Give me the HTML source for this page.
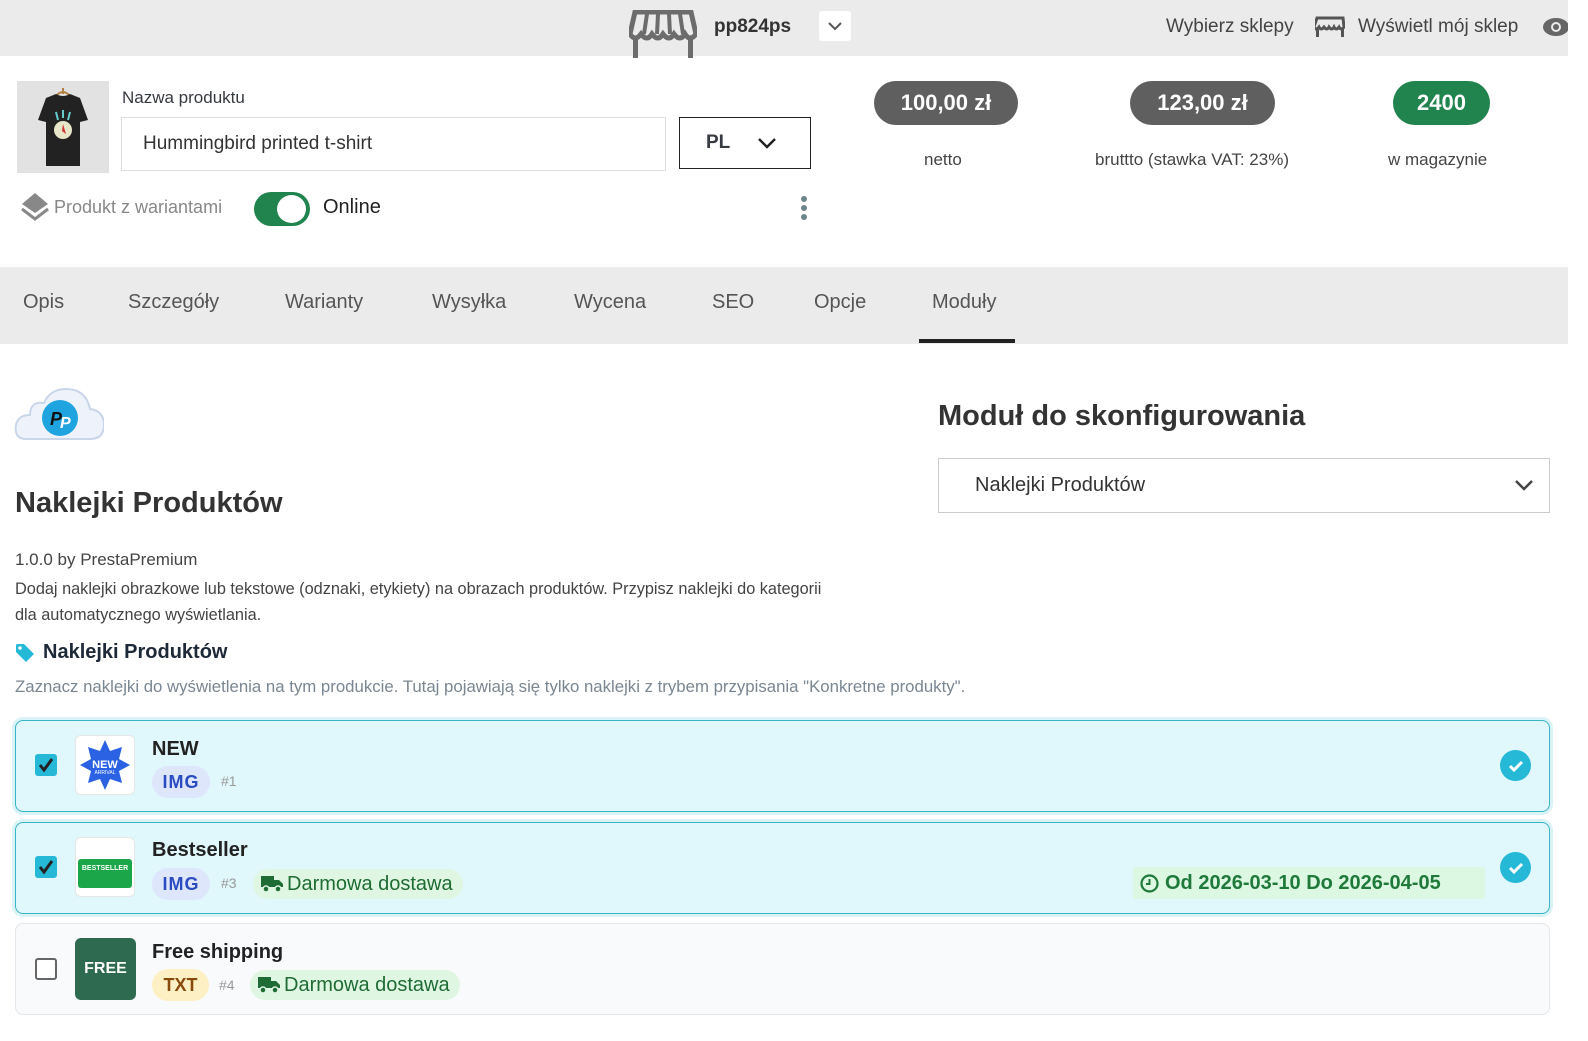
<!DOCTYPE html>
<html><head><meta charset="utf-8"><style>
*{box-sizing:border-box;margin:0;padding:0}
body{width:1588px;height:1041px;overflow:hidden;background:#fff;font-family:"Liberation Sans",sans-serif;color:#363a41;position:relative}
.a{position:absolute;white-space:nowrap}
.top{left:0;top:0;width:1568px;height:56px;background:#ebebeb}
.tabs{left:0;top:267px;width:1568px;height:77px;background:#ebebeb}
.tab{top:291px;font-size:20px;color:#555}
.pill{height:44px;border-radius:22px;background:#5f5f5f;color:#fff;font-weight:bold;font-size:22px;line-height:44px;text-align:center;top:81px}
.lbl{top:150px;font-size:17px;color:#444;text-align:center}
.card{left:15px;width:1535px;border-radius:8px}
.sel{background:#e0f7fc;border:1.5px solid #3ab5c5;box-shadow:0 0 0 3px #d9f3f7}
.cb{width:22px;height:22px;border-radius:3px}
.thumb{width:60px;height:60px;border-radius:6px;background:#fff;border:1px solid #e6e6e6}
.nm{font-size:20px;font-weight:bold;color:#222}
.tag{height:32px;border-radius:16px;font-weight:bold;font-size:18px;line-height:32px;text-align:center}
.img{background:#dde6fb;color:#2a4cc0;width:58px;letter-spacing:1px}
.hash{font-size:14px;color:#999}
.ship{background:#dff7e2;color:#1f6b34;font-size:20px;height:30px;line-height:30px;border-radius:15px;padding:0 10px 0 34px}
.ship svg{position:absolute;left:8px;top:6px}
.ok{width:31px;height:31px;border-radius:50%;background:#25b9d7}
</style></head><body>
<div class="a top"></div>
<svg class="a" style="left:629px;top:10px" width="68" height="48" viewBox="0 0 68 48"><path d="M6 2h56l5 22q-6 8-11 0q-5 8-11 0q-5 8-11 0q-5 8-11 0q-5 8-11 0q-6 8-11 0z" fill="none" stroke="#6c6c6c" stroke-width="5"/><path d="M18 4l-3 20M29 4l-1 20M40 4l1 20M51 4l3 20" stroke="#6c6c6c" stroke-width="4"/><rect x="4" y="28" width="5" height="20" fill="#6c6c6c"/><rect x="59" y="28" width="5" height="20" fill="#6c6c6c"/></svg>
<div class="a" style="left:714px;top:16px;font-size:19px;font-weight:bold;color:#333">pp824ps</div>
<div class="a" style="left:819px;top:11px;width:32px;height:30px;background:#fff;border-radius:3px"></div>
<svg class="a" style="left:827px;top:20px" width="16" height="12"><path d="M2 3l6 6 6-6" fill="none" stroke="#555" stroke-width="2"/></svg>
<div class="a" style="left:1166px;top:16px;font-size:19px;color:#444">Wybierz sklepy</div>
<svg class="a" style="left:1315px;top:16px" width="30" height="22" viewBox="0 0 30 22"><path d="M2 2h26l1 9q-3 4-5 0q-3 4-5 0q-2 4-5 0q-2 4-5 0q-3 4-5 0q-3 4-5 0z" fill="none" stroke="#555" stroke-width="3"/><rect x="1" y="12" width="3" height="9" fill="#555"/><rect x="26" y="12" width="3" height="9" fill="#555"/></svg>
<div class="a" style="left:1358px;top:16px;font-size:19px;color:#444">Wyświetl mój sklep</div>
<svg class="a" style="left:1542px;top:17px" width="26" height="20"><ellipse cx="14" cy="10" rx="13" ry="9" fill="#666"/><circle cx="14" cy="10" r="5" fill="#ebebeb"/><circle cx="14" cy="10" r="3" fill="#666"/></svg>

<div class="a" style="left:17px;top:81px;width:92px;height:92px;background:#e2e2e2"></div>
<svg class="a" style="left:30px;top:86px" width="66" height="84" viewBox="0 0 66 84"><path d="M33 2v6M26 10q7-8 14 0" stroke="#b08040" fill="none" stroke-width="2"/><path d="M16 12l10-4q7 4 14 0l10 4 8 22-8 2v44H16V36l-8-2z" fill="#222"/><circle cx="33" cy="44" r="9" fill="#e8e6c8"/><path d="M33 38l3 10-4-3z" fill="#c33"/><path d="M26 26l2 8M33 24v8M40 26l-2 8" stroke="#6cc" stroke-width="2"/></svg>
<div class="a" style="left:122px;top:88px;font-size:17px;color:#363a41">Nazwa produktu</div>
<div class="a" style="left:121px;top:117px;width:545px;height:54px;border:1px solid #ddd;font-size:19px;line-height:52px;padding-left:21px;color:#333">Hummingbird printed t-shirt</div>
<div class="a" style="left:679px;top:117px;width:132px;height:52px;border:1px solid #222;font-size:19px;font-weight:bold;line-height:50px;padding-left:26px">PL</div>
<svg class="a" style="left:757px;top:136px" width="20" height="14"><path d="M2 3l8 8 8-8" fill="none" stroke="#222" stroke-width="2.5"/></svg>
<svg class="a" style="left:19px;top:191px" width="32" height="32" viewBox="0 0 32 32"><path d="M16 2l13 11-13 9-13-9z" fill="#888"/><path d="M3 18l13 10 13-10" fill="none" stroke="#888" stroke-width="3"/></svg>
<div class="a" style="left:54px;top:197px;font-size:18px;color:#888">Produkt z wariantami</div>
<div class="a" style="left:254px;top:192px;width:56px;height:34px;border-radius:17px;background:#21834d"></div>
<div class="a" style="left:277px;top:195px;width:29px;height:28px;border-radius:50%;background:#fff"></div>
<div class="a" style="left:323px;top:196px;font-size:20px;color:#222">Online</div>
<div class="a" style="left:801px;top:196px;width:6px;height:6px;border-radius:50%;background:#6c868e;box-shadow:0 9px 0 #6c868e,0 18px 0 #6c868e"></div>

<div class="a pill" style="left:874px;width:144px">100,00 zł</div>
<div class="a pill" style="left:1130px;width:145px">123,00 zł</div>
<div class="a pill" style="left:1393px;width:97px;background:#21834d">2400</div>
<div class="a lbl" style="left:924px">netto</div>
<div class="a lbl" style="left:1095px">bruttto (stawka VAT: 23%)</div>
<div class="a lbl" style="left:1388px">w magazynie</div>

<div class="a tabs"></div>
<div class="a tab" style="left:23px">Opis</div>
<div class="a tab" style="left:128px">Szczegóły</div>
<div class="a tab" style="left:285px">Warianty</div>
<div class="a tab" style="left:432px">Wysyłka</div>
<div class="a tab" style="left:574px">Wycena</div>
<div class="a tab" style="left:712px">SEO</div>
<div class="a tab" style="left:814px">Opcje</div>
<div class="a tab" style="left:932px">Moduły</div>
<div class="a" style="left:919px;top:339px;width:96px;height:4px;background:#222"></div>

<svg class="a" style="left:14px;top:381px" width="90" height="60" viewBox="0 0 90 60"><path d="M12 58q-12 0-10-14q2-10 14-10q0-14 14-12q6-14 22-14q20 0 24 20q14 2 14 16q0 14-14 14z" fill="#eef3fb" stroke="#c9d6ea" stroke-width="2"/><circle cx="46" cy="37" r="18" fill="#1fa4e0"/><text x="36" y="44" font-family="Liberation Sans" font-weight="bold" font-style="italic" font-size="18" fill="#111">P</text><text x="46" y="47" font-family="Liberation Sans" font-weight="bold" font-style="italic" font-size="16" fill="#fff">P</text></svg>
<div class="a" style="left:15px;top:487px;font-size:29px;font-weight:bold;color:#333">Naklejki Produktów</div>
<div class="a" style="left:15px;top:550px;font-size:17px;color:#444">1.0.0 by PrestaPremium</div>
<div class="a" style="left:15px;top:576px;font-size:16.3px;color:#444;line-height:26px">Dodaj naklejki obrazkowe lub tekstowe (odznaki, etykiety) na obrazach produktów. Przypisz naklejki do kategorii</div>
<div class="a" style="left:15px;top:602px;font-size:16.3px;color:#444;line-height:26px">dla automatycznego wyświetlania.</div>
<svg class="a" style="left:15px;top:643px" width="20" height="20" viewBox="0 0 20 20"><path d="M1 2v7l10 10 8-8L9 1H2z" fill="#25b9d7"/><circle cx="5" cy="5" r="1.8" fill="#fff"/></svg>
<div class="a" style="left:43px;top:641px;font-size:20px;font-weight:bold;color:#1d2838">Naklejki Produktów</div>
<div class="a" style="left:15px;top:677px;font-size:16.8px;color:#7a8692">Zaznacz naklejki do wyświetlenia na tym produkcie. Tutaj pojawiają się tylko naklejki z trybem przypisania "Konkretne produkty".</div>

<div class="a" style="left:938px;top:400px;font-size:29px;font-weight:bold;color:#333">Moduł do skonfigurowania</div>
<div class="a" style="left:938px;top:458px;width:612px;height:55px;border:1px solid #ccc;font-size:20px;line-height:53px;padding-left:36px;color:#333">Naklejki Produktów</div>
<svg class="a" style="left:1514px;top:478px" width="20" height="14"><path d="M2 3l8 8 8-8" fill="none" stroke="#444" stroke-width="2.5"/></svg>

<!-- card 1 -->
<div class="a card sel" style="top:720px;height:92px"></div>
<div class="a cb" style="left:35px;top:754px;background:#25b9d7"></div>
<svg class="a" style="left:37px;top:756px" width="18" height="18"><path d="M3 9l4 5 8-11" fill="none" stroke="#222" stroke-width="3"/></svg>
<div class="a thumb" style="left:75px;top:735px"></div>
<svg class="a" style="left:79px;top:739px" width="52" height="52" viewBox="0 0 52 52"><polygon points="26,1 31,12 43,8 40,20 51,26 40,32 43,44 31,40 26,51 21,40 9,44 12,32 1,26 12,20 9,8 21,12" fill="#2b62e3"/><text x="26" y="29" text-anchor="middle" font-family="Liberation Sans" font-weight="bold" font-size="11" fill="#fff">NEW</text><text x="26" y="35" text-anchor="middle" font-family="Liberation Sans" font-size="5" fill="#fff">ARRIVAL</text></svg>
<div class="a nm" style="left:152px;top:738px">NEW</div>
<div class="a tag img" style="left:152px;top:766px">IMG</div>
<div class="a hash" style="left:221px;top:773px">#1</div>
<div class="a ok" style="left:1500px;top:750px"></div>
<svg class="a" style="left:1507px;top:758px" width="18" height="16"><path d="M3 8l4 4 8-8" fill="none" stroke="#fff" stroke-width="3"/></svg>

<!-- card 2 -->
<div class="a card sel" style="top:822px;height:92px"></div>
<div class="a cb" style="left:35px;top:856px;background:#25b9d7"></div>
<svg class="a" style="left:37px;top:858px" width="18" height="18"><path d="M3 9l4 5 8-11" fill="none" stroke="#222" stroke-width="3"/></svg>
<div class="a thumb" style="left:75px;top:837px"></div>
<div class="a" style="left:78px;top:859px;width:54px;height:29px;border-radius:3px;background:#1ca64a;color:#fff;font-size:7px;font-weight:bold;text-align:center;line-height:10px;padding-top:5px">BESTSELLER</div>
<div class="a nm" style="left:152px;top:839px">Bestseller</div>
<div class="a tag img" style="left:152px;top:868px">IMG</div>
<div class="a hash" style="left:221px;top:875px">#3</div>
<div class="a ship" style="left:253px;top:869px"><svg width="22" height="18" viewBox="0 0 22 18"><path d="M0 1h13v11H0zM13 5h5l4 4v3h-9z" fill="#1f6b34"/><circle cx="5" cy="14" r="3" fill="#1f6b34" stroke="#dff7e2" stroke-width="1.5"/><circle cx="17" cy="14" r="3" fill="#1f6b34" stroke="#dff7e2" stroke-width="1.5"/></svg>Darmowa dostawa</div>
<div class="a" style="left:1133px;top:867px;width:352px;height:32px;background:#dcf8e3;border-radius:3px;color:#1f7a3a;font-weight:bold;font-size:20px;line-height:32px;padding-left:32px">Od 2026-03-10 Do 2026-04-05</div>
<svg class="a" style="left:1140px;top:874px" width="19" height="19"><circle cx="9.5" cy="9.5" r="8" fill="none" stroke="#1f7a3a" stroke-width="2.2"/><path d="M9.5 5v5H6" fill="none" stroke="#1f7a3a" stroke-width="2"/></svg>
<div class="a ok" style="left:1500px;top:852px"></div>
<svg class="a" style="left:1507px;top:860px" width="18" height="16"><path d="M3 8l4 4 8-8" fill="none" stroke="#fff" stroke-width="3"/></svg>

<!-- card 3 -->
<div class="a card" style="top:923px;height:92px;background:#f8fafc;border:1px solid #e3e6ea"></div>
<div class="a cb" style="left:35px;top:958px;border:2px solid #666;background:#fff"></div>
<div class="a" style="left:75px;top:938px;width:61px;height:62px;border-radius:6px;background:#2d6a4f;color:#fff;font-weight:bold;font-size:16px;line-height:62px;text-align:center">FREE</div>
<div class="a nm" style="left:152px;top:941px">Free shipping</div>
<div class="a tag" style="left:152px;top:969px;width:57px;background:#fdf0c4;color:#8a4a0c">TXT</div>
<div class="a hash" style="left:219px;top:977px">#4</div>
<div class="a ship" style="left:250px;top:970px"><svg width="22" height="18" viewBox="0 0 22 18"><path d="M0 1h13v11H0zM13 5h5l4 4v3h-9z" fill="#1f6b34"/><circle cx="5" cy="14" r="3" fill="#1f6b34" stroke="#dff7e2" stroke-width="1.5"/><circle cx="17" cy="14" r="3" fill="#1f6b34" stroke="#dff7e2" stroke-width="1.5"/></svg>Darmowa dostawa</div>
</body></html>
